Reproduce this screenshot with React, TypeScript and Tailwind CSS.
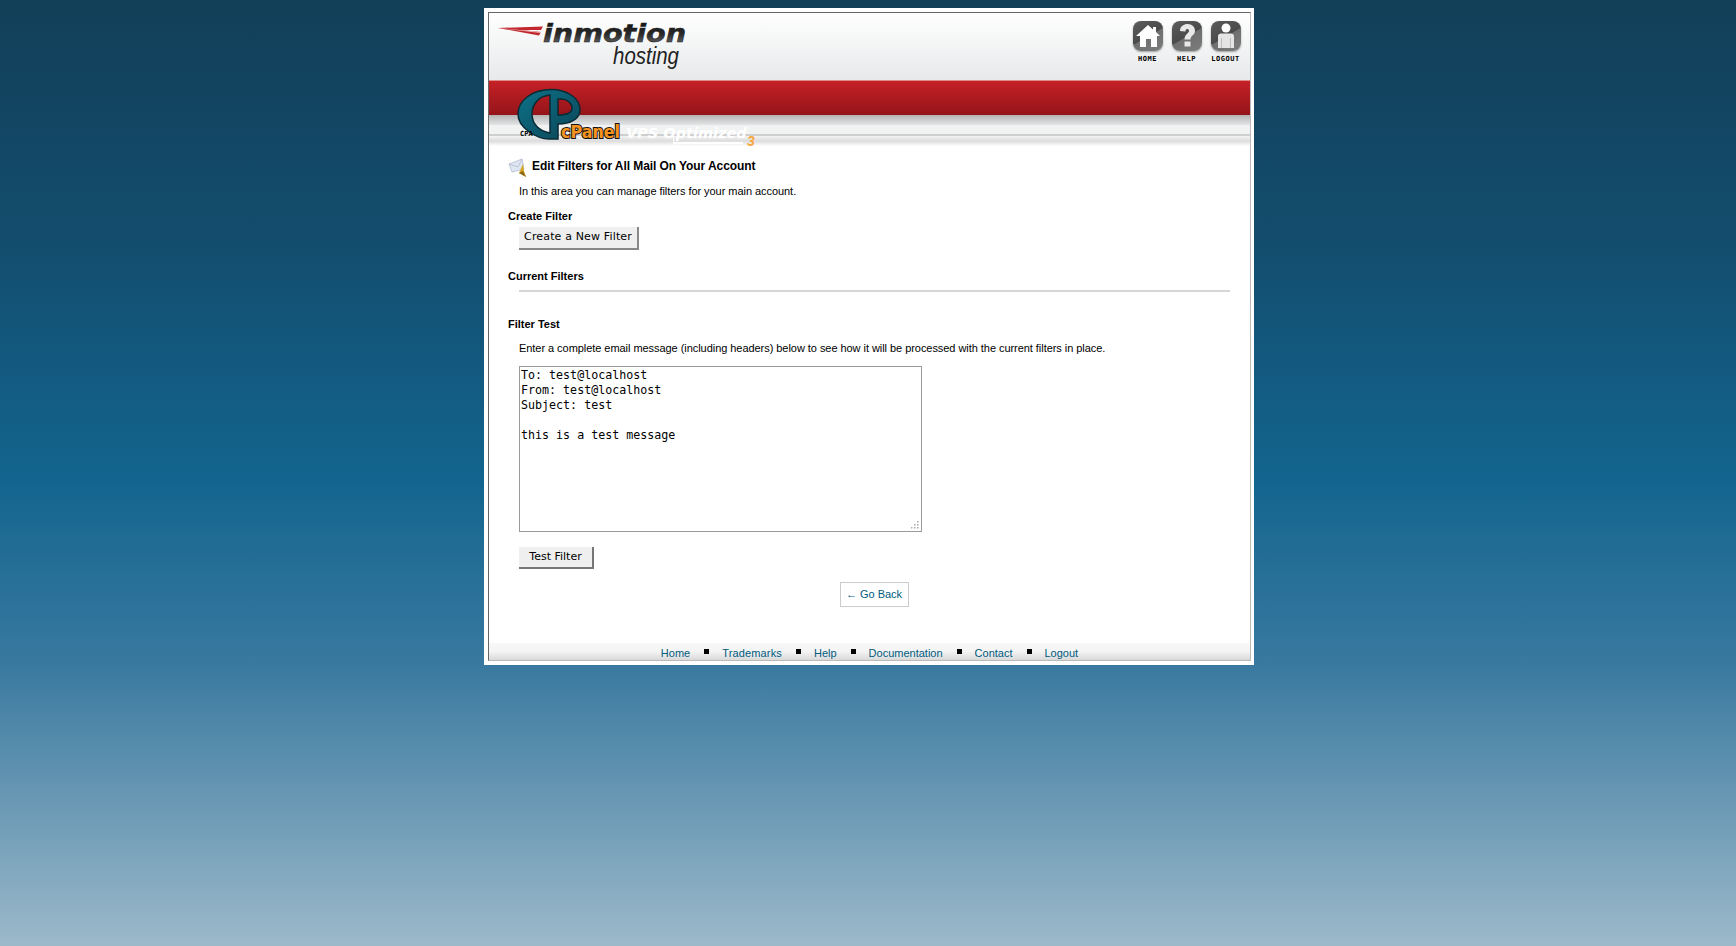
const footerLinks = ['Home', 'Trademarks', 'Help', 'Documentation', 'Contact', 'Logout'];

function InmotionLogo() {
  return (
    <svg width="200" height="54" viewBox="0 0 200 54" className="block">
      <defs>
        <linearGradient id="imText" x1="0" y1="0" x2="0" y2="1">
          <stop offset="0" stopColor="#0d0d0d" />
          <stop offset="0.55" stopColor="#2b2b2b" />
          <stop offset="1" stopColor="#777" />
        </linearGradient>
      </defs>
      <path d="M4 10 L49 8.5 L47 12 L27 12 L47 14 L45 17.5 Z" fill="#c1272d" />
      <path d="M4 10 L26 12 L47 14 L47 15 Z" fill="#eec0c0" />
      <text x="49" y="23.5" fontFamily="'DejaVu Sans', sans-serif" fontWeight="700" fontStyle="italic" fontSize="25" stroke="#1a1a1a" strokeWidth="0.5" fill="url(#imText)" textLength="143" lengthAdjust="spacingAndGlyphs">inmotion</text>
      <text x="119" y="46" fontFamily="'Liberation Sans', sans-serif" fontStyle="italic" fontSize="24" fill="#222" textLength="66" lengthAdjust="spacingAndGlyphs">hosting</text>
    </svg>
  );
}

function IconTile({ label, children }: { label: string; children: React.ReactNode }) {
  return (
    <div className="flex w-[39px] flex-col items-center">
      <div className="relative h-[30px] w-[30px] overflow-hidden rounded-[8px] bg-[linear-gradient(150deg,#5c5c5c_0%,#4a4a4a_50%,#6f6f6f_52%,#7d7d7d_100%)] shadow-[0_1px_2px_rgba(0,0,0,0.35)]">
        <svg viewBox="0 0 30 30" className="h-full w-full">{children}</svg>
      </div>
      <div className="mt-[4px] font-['DejaVu_Sans_Mono',monospace] text-[7px] leading-[8px] font-bold tracking-[0.5px] text-black">{label}</div>
    </div>
  );
}

function CpanelLogo() {
  return (
    <svg width="106" height="56" viewBox="0 0 106 56" className="block">
      <defs>
        <linearGradient id="cpFill" x1="0" y1="0" x2="1" y2="1">
          <stop offset="0" stopColor="#0d7288" />
          <stop offset="1" stopColor="#0b4557" />
        </linearGradient>
      </defs>
      <path
        fillRule="evenodd"
        d="M34 1.5 C50 1.5 63 10 63 22 C63 31 53 36 41 36 L41 51 L32 51 C20 51 1 40 1 26 C1 12 16 1.5 34 1.5 Z M33 7 C22 8 15 16 15 26 C15 36 22 43 33 45 Z M41 11 L44 11 C50 11 55 15 55 20 C55 25 50 27 41 27 Z"
        fill="url(#cpFill)"
        stroke="#0a2a35"
        strokeWidth="1.5"
      />
      <text x="44" y="49.5" fontFamily="'DejaVu Sans', sans-serif" fontWeight="700" fontSize="17" fill="#f7941d" stroke="#111" strokeWidth="2" paintOrder="stroke" textLength="59" lengthAdjust="spacingAndGlyphs">cPanel</text>
    </svg>
  );
}

function MailIcon() {
  return (
    <svg width="20" height="20" viewBox="0 0 20 20" className="mt-[3px] block shrink-0">
      <path d="M1 6 L14 1 L16 11 L4 14 Z" fill="#dfe6f2" stroke="#a9b6c9" strokeWidth="0.7" />
      <path d="M1 6 L10 9 L14 1" fill="none" stroke="#a9b6c9" strokeWidth="0.7" />
      <path d="M11 15 L15 6 L16 13 L18 19 Z" fill="#d9a520" />
      <path d="M11 15 L15 13 L18 19 Z" fill="#8a6a1a" />
    </svg>
  );
}

function ResizeGrip() {
  const dots = [[8, 2], [5, 5], [8, 5], [2, 8], [5, 8], [8, 8]];
  return (
    <svg width="11" height="11" viewBox="0 0 11 11" className="pointer-events-none absolute right-[2px] bottom-[2px]">
      {dots.map(([x, y]) => (
        <rect key={`${x}-${y}`} x={x} y={y} width="1.5" height="1.5" fill="#aaa" />
      ))}
    </svg>
  );
}

export default function App() {
  return (
    <div className="min-h-[946px] bg-[linear-gradient(to_bottom,#123f58_0px,#134d6e_241px,#13658f_482px,#39799f_663px,#9cb9ca_946px)] pt-[8px] font-['Liberation_Sans',Arial,sans-serif] text-[11px] text-black">
      <div className="mx-auto w-[770px] translate-x-[1px] bg-white pt-[4px] pr-[3px] pb-[4px] pl-[4px]">
        <div className="border border-t-[#666] border-r-[#bbb] border-b-[#bbb] border-l-[#666]">
          {/* Header */}
          <div className="flex h-[67px] items-start justify-between bg-gradient-to-b from-white to-[#e7e9ea] pr-[5px]">
            <div className="pl-[5px] pt-[5px]">
              <InmotionLogo />
            </div>
            <div className="flex pt-[8px]">
              <IconTile label="HOME">
                <path d="M15 4 L20 8.5 L20 6 L23 6 L23 11 L27 15 L24 15 L24 26 L18 26 L18 18 L13 18 L13 26 L7 26 L7 15 L3 15 Z" fill="#fff" />
              </IconTile>
              <IconTile label="HELP">
                <path d="M8 10 C8 5 12 3 15.5 3 C20 3 23 6 23 10 C23 14 18.5 14.5 18.5 18.5 L12.5 18.5 C12.5 13 17 12.5 17 10 C17 8.5 16 8 15 8 C14 8 13.5 9 13.5 10.5 Z" fill="#e8e8e8" />
                <rect x="12.5" y="20.5" width="6" height="5" fill="#e8e8e8" />
              </IconTile>
              <IconTile label="LOGOUT">
                <circle cx="15" cy="7" r="4.5" fill="#fff" />
                <path d="M7 15 C7 13 9 12.5 11 12.5 L19 12.5 C21 12.5 23 13 23 15 L23 27 L7 27 Z" fill="#e4e4e4" />
                <path d="M10.5 17 L10.5 27 M19.5 17 L19.5 27" stroke="#aaa" strokeWidth="0.7" />
              </IconTile>
            </div>
          </div>

          {/* Red band and cPanel bar */}
          <div className="relative h-[66px]">
            <div className="h-[35px] border-t border-[#e08a8c] bg-gradient-to-b from-[#c52026] to-[#94151a]" />
            <div className="h-[10px] bg-gradient-to-b from-[#b5b5b5] to-[#e3e5e6]" />
            <div className="h-[9px] bg-[#f1f3f3]" />
            <div className="h-[12px] border-t-2 border-[#cfcfcf] bg-gradient-to-b from-[#f4f4f4] via-[#dcdcdc] to-white" />
            <div className="absolute top-[45px] left-[137px] font-['DejaVu_Sans',sans-serif] text-[14.5px] leading-[16px] font-bold whitespace-nowrap text-white italic">VPS Optimized</div>
            <div className="absolute top-[62px] left-[184px] h-[2px] w-[70px] bg-white" />
            <div className="absolute top-[56px] left-[184px] h-[9px] w-[1px] bg-white" />
            <div className="absolute top-[53px] left-[258px] text-[14px] leading-[16px] font-bold text-[#f7a63a] italic">3</div>
            <div className="absolute top-[8px] left-[28px]">
              <CpanelLogo />
            </div>
            <div className="absolute top-[49px] left-[31px] font-['DejaVu_Sans_Mono',monospace] text-[7px] leading-[10px] font-bold">CPA</div>
          </div>

          {/* Content */}
          <div className="pt-[9px] pr-[20px] pl-[19px]">
            <div className="flex h-[22px] items-center">
              <MailIcon />
              <h1 className="ml-[4px] text-[12px] leading-[14px] font-bold tracking-[-0.08px]">Edit Filters for All Mail On Your Account</h1>
            </div>
            <p className="mt-[8px] ml-[11px] leading-[13px] tracking-[-0.05px]">In this area you can manage filters for your main account.</p>
            <h2 className="mt-[12px] leading-[13px] font-bold">Create Filter</h2>
            <button className="mt-[4px] ml-[11px] block h-[23px] w-[120px] border-r-2 border-b-2 border-[#888] bg-[#efefef] text-center font-['DejaVu_Sans',sans-serif] text-[11px] tracking-[0.15px]">Create a New Filter</button>
            <h2 className="mt-[20px] leading-[13px] font-bold">Current Filters</h2>
            <div className="mt-[7px] ml-[11px] h-[2px] bg-[#d6d6d6]" />
            <h2 className="mt-[26px] leading-[13px] font-bold">Filter Test</h2>
            <p className="mt-[11px] ml-[11px] leading-[13px] tracking-[-0.05px]">Enter a complete email message (including headers) below to see how it will be processed with the current filters in place.</p>
            <div className="relative mt-[11px] ml-[11px] h-[166px] w-[403px]">
              <textarea
                readOnly
                defaultValue={'To: test@localhost\nFrom: test@localhost\nSubject: test\n\nthis is a test message'}
                className="block h-full w-full resize-none border border-[#999] px-[1px] py-[1px] font-['DejaVu_Sans_Mono',monospace] text-[11.67px] leading-[15px] text-black outline-none"
              />
              <ResizeGrip />
            </div>
            <button className="mt-[15px] ml-[11px] block h-[22px] w-[75px] border-r-2 border-b-2 border-[#777] bg-[#efefef] text-center font-['DejaVu_Sans',sans-serif] text-[11px]">Test Filter</button>
            <div className="mt-[13px] flex justify-center">
              <a className="ml-[10px] flex h-[25px] w-[69px] items-center justify-center border border-[#ccc] text-[#005b80]">← Go Back</a>
            </div>
          </div>

          {/* Footer */}
          <div className="mt-[36px] flex h-[17px] items-center justify-center bg-gradient-to-b from-[#f8f8f8] via-[#f4f4f4] to-[#d9d9d9] pt-[4px] leading-[13px]">
            {footerLinks.map((name, i) => (
              <span key={name} className="flex items-center">
                {i > 0 && <span className="mr-[13px] mb-[4px] ml-[14px] h-[5px] w-[5px] bg-black" />}
                <a className={name === 'Trademarks' ? 'tracking-[0.15px] text-[#005b80]' : 'text-[#005b80]'}>{name}</a>
              </span>
            ))}
          </div>
        </div>
      </div>
    </div>
  );
}
